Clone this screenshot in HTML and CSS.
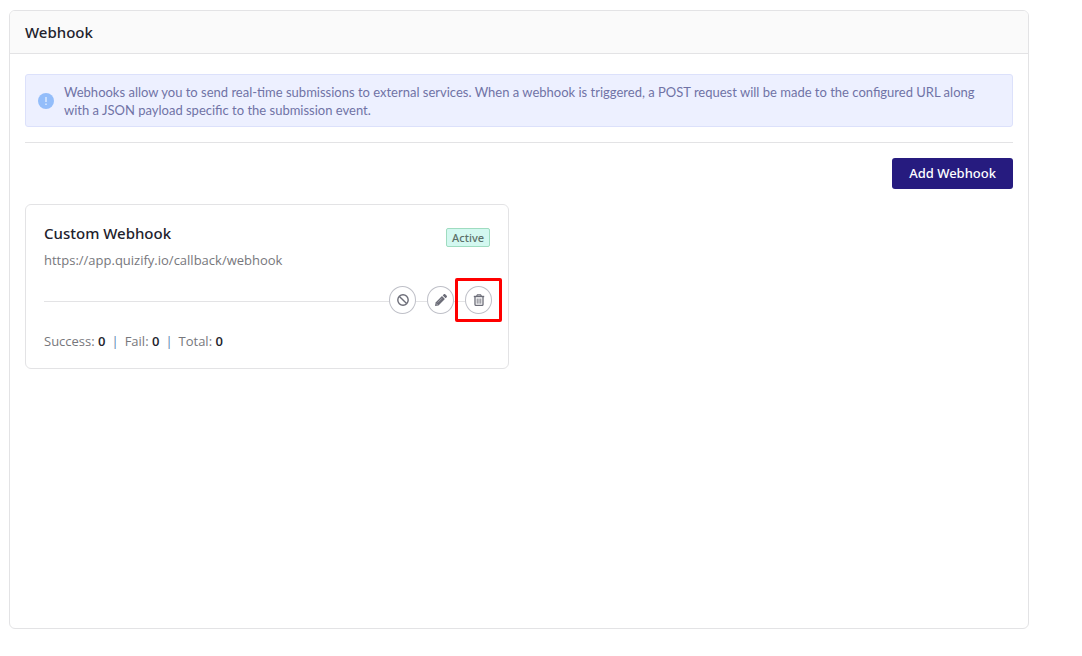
FILE: index.html
```html
<!DOCTYPE html>
<html lang="en">
<head>
    <meta charset="UTF-8">
    <meta name="viewport" content="width=device-width, initial-scale=1.0">
    <title>Webhook</title>
    <link rel="stylesheet" href="styles.css">
</head>
<body>
    <main class="panel">
        <header class="panel-header">
            <h1>Webhook</h1>
        </header>
        <div class="panel-body">
            <div class="notice">
                <svg class="notice-icon" viewBox="0 0 16 16" aria-hidden="true">
                    <circle cx="8" cy="8" r="8" fill="#93bdfa"/>
                    <path d="M8 4v5M8 10.5v1.5" stroke="#fff" stroke-width="1"/>
                </svg>
                <p>Webhooks allow you to send real-time submissions to external services. When a webhook is triggered, a POST request will be made to the configured URL along with a JSON payload specific to the submission event.</p>
            </div>
            <hr>
            <div class="toolbar">
                <button type="button" class="add-btn">Add Webhook</button>
            </div>
            <div class="webhook-list">
                <article class="webhook-card">
                    <div class="card-top">
                        <div>
                            <h2>Custom Webhook</h2>
                            <p class="webhook-url">https://app.quizify.io/callback/webhook</p>
                        </div>
                        <span class="badge">Active</span>
                    </div>
                    <div class="card-actions">
                        <button type="button" class="icon-btn" aria-label="Disable">
                            <svg viewBox="0 0 12 12" fill="none" stroke="#6c6d78" stroke-width="1.4">
                                <circle cx="6" cy="6" r="5.2"/>
                                <path d="M2.4 2.4l7.2 7.2"/>
                            </svg>
                        </button>
                        <button type="button" class="icon-btn" aria-label="Edit">
                            <svg viewBox="0 0 12 12" fill="#6c6d78">
                                <path d="M7 2.1L9.9 5 3.5 11.4 0 12l.6-3.5z"/>
                                <path d="M7.7 1.4L8.8.3c.4-.4 1-.4 1.4 0l1.5 1.5c.4.4.4 1 0 1.4l-1.1 1.1z"/>
                                <path d="M2.7 8.5l4.2-4.2" stroke="#d8d8dd" stroke-width=".5"/>
                                <path d="M1.2 9.6l1.2 1.2" stroke="#fff" stroke-width=".6"/>
                            </svg>
                        </button>
                        <button type="button" class="icon-btn highlighted" aria-label="Delete">
                            <svg viewBox="0 0 12 12" fill="none" stroke="#6c6d78">
                                <path d="M.8 2.5h10.4" stroke-width="1.4"/>
                                <path d="M3.6 2.2l.8-1.4h3.2l.8 1.4" stroke-width="1.2"/>
                                <path d="M2 3v7.4c0 .6.4 1 1 1h6c.6 0 1-.4 1-1V3" stroke-width="1.3"/>
                                <path d="M4.2 4.5v5.2M6 4.5v5.2M7.8 4.5v5.2" stroke-width=".9"/>
                            </svg>
                        </button>
                    </div>
                    <div class="stats">
                        <span>Success: <b>0</b></span>
                        <span class="sep">|</span>
                        <span>Fail: <b>0</b></span>
                        <span class="sep">|</span>
                        <span>Total: <b>0</b></span>
                    </div>
                </article>
            </div>
        </div>
    </main>
</body>
</html>
```
FILE: styles.css
```css
* {
    box-sizing: border-box;
}
body {
    display: flex;
    min-height: 100vh;
    margin: 0;
    padding: 10px 53px 27px 9px;
    background-color: #fff;
    color: #22222c;
    font-family: "Open Sans", "Noto Sans", sans-serif;
    font-size: 13px;
    line-height: 18px;
}
h1, h2, p {
    margin: 0;
}
h1, h2, .add-btn, .badge {
    font-family: "Noto Sans", sans-serif;
    font-weight: 500;
}
h1, h2 {
    font-size: 15px;
    line-height: 20px;
}
.panel {
    flex: 1;
    border: 1px solid #e3e3e5;
    border-radius: 6px;
    overflow: hidden;
}
.panel-header {
    padding: 11px 15px;
    background-color: #fafafa;
    border-bottom: 1px solid #e3e3e5;
}
.panel-body {
    padding: 20px 15px;
}
.notice {
    display: flex;
    align-items: center;
    gap: 10px;
    padding: 8px 12px 7px;
    background-color: #edf0ff;
    border: 1px solid #dce1fb;
    border-radius: 3px;
    color: #7073a6;
    font-family: Lato, sans-serif;
}
.notice-icon {
    flex: none;
    width: 16px;
    height: 16px;
}
hr {
    margin: 15px 0;
    border: 0;
    border-top: 1px solid #e3e3e5;
}
.toolbar {
    display: flex;
    justify-content: flex-end;
    margin-bottom: 15px;
}
.add-btn {
    padding: 6px 17px;
    border: none;
    border-radius: 3px;
    background-color: #261b7f;
    color: #fff;
    font-size: 13px;
    line-height: 19px;
    cursor: pointer;
}
.webhook-list {
    display: grid;
    grid-template-columns: 1fr 1fr;
    gap: 20px;
}
.webhook-card {
    padding: 18px;
    border: 1px solid #e3e3e5;
    border-radius: 6px;
}
.card-top {
    display: flex;
    justify-content: space-between;
    align-items: flex-start;
}
.webhook-url {
    margin-top: 8px;
    color: #77777c;
}
.badge {
    margin-top: 5px;
    padding: 0 5px;
    border: 1px solid #9fdcc0;
    border-radius: 2px;
    background-color: #d3f8f0;
    color: #5c7069;
    font-size: 11px;
    line-height: 17px;
}
/* buttons sit on top of the divider line */
.card-actions {
    display: flex;
    justify-content: flex-end;
    gap: 11px;
    margin: 17px -2px 18px 0;
    background: linear-gradient(#e3e3e5, #e3e3e5) 0 15px / 100% 1px no-repeat;
}
.icon-btn {
    display: flex;
    align-items: center;
    justify-content: center;
    width: 27px;
    height: 28px;
    padding: 0;
    border: 1px solid #bfc0c8;
    border-radius: 50%;
    background-color: #fff;
    cursor: pointer;
}
.icon-btn svg {
    width: 12px;
    height: 12px;
}
.highlighted {
    position: relative;
}
.highlighted::after {
    content: "";
    position: absolute;
    inset: -9px -11px;
    border: 3px solid #f00;
    border-radius: 2px;
}
.stats {
    display: flex;
    gap: 6px;
    color: #77777c;
}
.stats b {
    color: #22222c;
    font-weight: 600;
}
.sep {
    color: #5b7fae;
}
```
